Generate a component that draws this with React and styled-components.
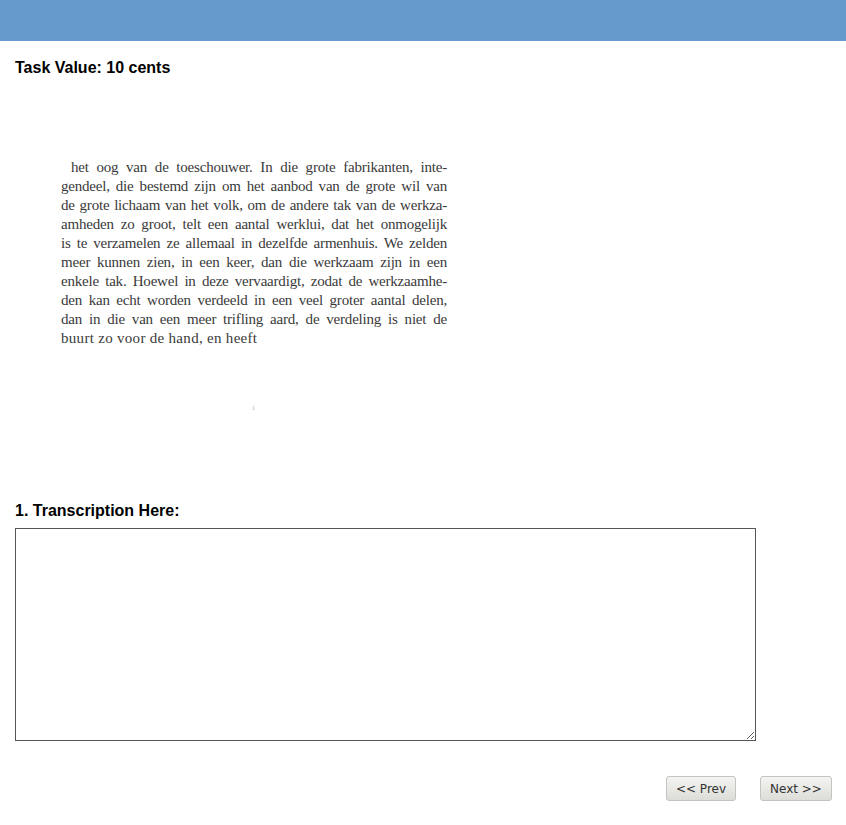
import styled, { createGlobalStyle } from "styled-components";

const GlobalStyle = createGlobalStyle`
  body {
    margin: 0;
    background: #fff;
    font-family: "Liberation Sans", Arial, sans-serif;
  }
`
const Header = styled.div`
  height: 41px;
  background: #6699cc;
`
const Main = styled.div`
  padding: 0 14px 0 15px;
`
const Title = styled.div`
  margin-top: 18px;
  font-size: 16px;
  line-height: 18px;
  font-weight: bold;
  color: #000;
`
const Scan = styled.div`
  padding: 81px 0 0 46px;
  width: 386px;
  font-family: "Liberation Serif", "Times New Roman", serif;
  font-size: 15px;
  letter-spacing: -0.2px;
  line-height: 19px;
  color: #3a3a3a;
`
const ScanLine = styled.div`
  text-align: justify;
  text-align-last: ${p => (p.$last ? "left" : "justify")};
  letter-spacing: ${p => (p.$last ? "0.3px" : "-0.2px")};
  padding-left: ${p => (p.$indent ? "10px" : "0")};
  height: 19px;
`
const PageNum = styled.div`
  margin: 56px 0 0 191px;
  height: 8px;
  font-size: 6px;
  line-height: 8px;
  color: #aaa;
`
const Label = styled.div`
  margin-top: 90px;
  font-size: 16px;
  line-height: 18px;
  font-weight: bold;
  color: #000;
`
const Answer = styled.textarea`
  display: block;
  margin-top: 8px;
  width: 741px;
  height: 213px;
  box-sizing: border-box;
  border: 1px solid #555;
  padding: 2px;
  resize: vertical;
  font-family: "DejaVu Sans", sans-serif;
  font-size: 13px;
`
const Nav = styled.div`
  display: flex;
  justify-content: flex-end;
  gap: 24px;
  margin-top: 35px;
`
const NavButton = styled.button`
  width: ${p => p.$w}px;
  height: 25px;
  box-sizing: border-box;
  border: 1px solid #c4c4c0;
  border-radius: 3px;
  background: linear-gradient(#f4f4f2, #dcdcd8);
  font-family: "DejaVu Sans", sans-serif;
  font-size: 12px;
  color: #333;
  cursor: pointer;
`

const lines = [
  "het oog van de toeschouwer. In die grote fabrikanten, inte-",
  "gendeel, die bestemd zijn om het aanbod van de grote wil van",
  "de grote lichaam van het volk, om de andere tak van de werkza-",
  "amheden zo groot, telt een aantal werklui, dat het onmogelijk",
  "is te verzamelen ze allemaal in dezelfde armenhuis. We zelden",
  "meer kunnen zien, in een keer, dan die werkzaam zijn in een",
  "enkele tak. Hoewel in deze vervaardigt, zodat de werkzaamhe-",
  "den kan echt worden verdeeld in een veel groter aantal delen,",
  "dan in die van een meer trifling aard, de verdeling is niet de",
  "buurt zo voor de hand, en heeft",
]

function App() {
  return (
    <>
      <GlobalStyle />
      <Header />
      <Main>
        <Title>Task Value: 10 cents</Title>
        <Scan>
          {lines.map((l, i) => (
            <ScanLine key={i} $indent={i === 0} $last={i === lines.length - 1}>{l}</ScanLine>
          ))}
          <PageNum>1</PageNum>
        </Scan>
        <Label>1. Transcription Here:</Label>
        <Answer />
        <Nav>
          <NavButton $w={70}>&lt;&lt; Prev</NavButton>
          <NavButton $w={72}>Next &gt;&gt;</NavButton>
        </Nav>
      </Main>
    </>
  );
}

export default App;
